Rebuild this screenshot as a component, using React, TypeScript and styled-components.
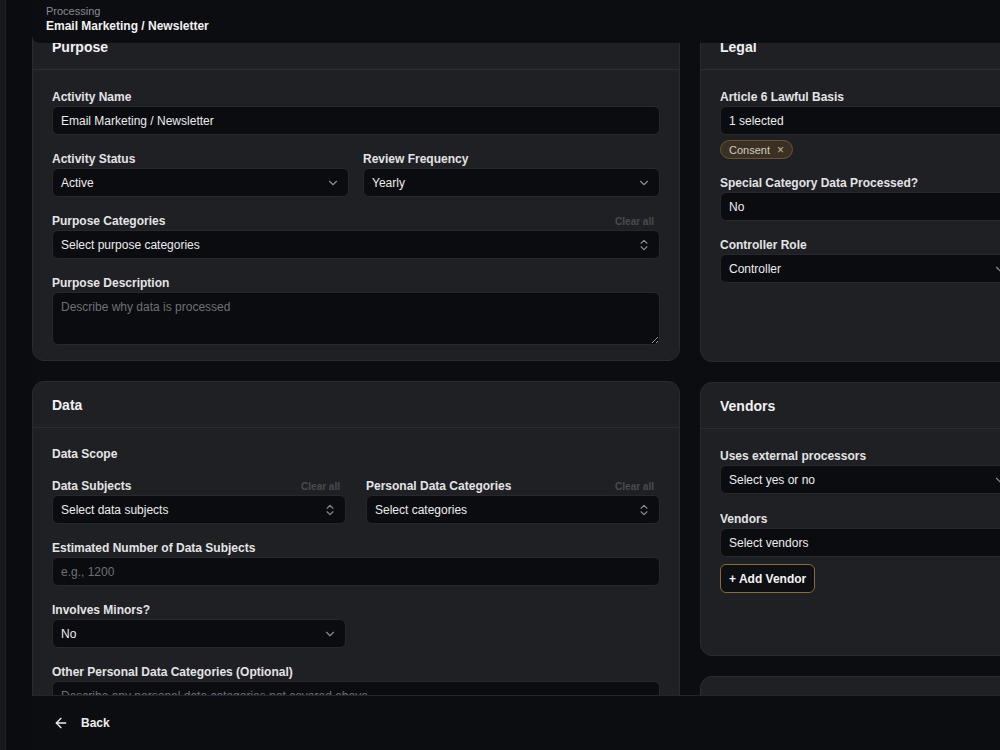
import React from "react";
import styled, { createGlobalStyle } from "styled-components";
import { ChevronDown, ChevronsUpDown, ArrowLeft } from "lucide-react";

const GlobalStyle = createGlobalStyle`
  html, body {
    margin: 0;
    padding: 0;
    height: 100%;
    overflow: hidden;
    background: #0b0c0f;
  }
  body {
    font-family: "Liberation Sans", Arial, sans-serif;
    -webkit-font-smoothing: antialiased;
  }
  #root { height: 100%; }
  * { box-sizing: border-box; }
`;

const Shell = styled.div`
  display: flex;
  height: 100vh;
  background: #0b0c0f;
`;

const Rail = styled.div`
  flex: 0 0 6px;
  background: #17181b;
  border-right: 1px solid #1e1f22;
`;

const Main = styled.main`
  flex: 1;
  min-width: 0;
  margin-left: 26px;
  display: flex;
  flex-direction: column;
  overflow: hidden;
  background: #0c0d11;
`;

const Viewport = styled.div`
  flex: 1;
  position: relative;
  overflow: hidden;
`;

const TopBar = styled.header`
  position: absolute;
  top: 0;
  left: 0;
  right: 0;
  height: 43px;
  z-index: 2;
  background: #0c0d11;
  border-bottom-left-radius: 8px;
  padding: 5px 14px 0;
  display: flex;
  flex-direction: column;
  gap: 1px;
`;

const Eyebrow = styled.div`
  font-size: 11px;
  line-height: 13px;
  color: #8a8c92;
`;

const PageTitle = styled.div`
  font-size: 12px;
  line-height: 15px;
  font-weight: 700;
  color: #f2f2f3;
`;

const Columns = styled.div`
  display: flex;
  gap: 20px;
  padding-top: 23px;
  align-items: flex-start;
`;

const Column = styled.div<{ $width: number }>`
  flex: 0 0 ${(p) => p.$width}px;
  display: flex;
  flex-direction: column;
  gap: 20px;
`;

const Card = styled.section<{ $minHeight?: number }>`
  background: #1f2023;
  border: 1px solid #2a2b2f;
  border-radius: 12px;
  min-height: ${(p) => (p.$minHeight ? `${p.$minHeight}px` : "auto")};
`;

const CardHeader = styled.div`
  height: 46px;
  padding: 0 19px;
  display: flex;
  align-items: center;
  border-bottom: 1px solid #2c2d31;
`;

const CardTitle = styled.h2`
  margin: 0;
  font-size: 14px;
  font-weight: 700;
  color: #f1f1f2;
`;

const CardBody = styled.div<{ $fieldGap?: number }>`
  padding: 20px 19px 15px;
  display: flex;
  flex-direction: column;
  gap: ${(p) => p.$fieldGap ?? 17}px;
`;

const SubHeading = styled.h3`
  margin: -1px 0 1px;
  font-size: 12px;
  line-height: 14px;
  font-weight: 700;
  color: #e6e6e8;
`;

const Field = styled.div`
  display: flex;
  flex-direction: column;
  gap: 2px;
  min-width: 0;
`;

const LabelRow = styled.div`
  display: flex;
  justify-content: space-between;
  align-items: center;
  line-height: 14px;
`;

const Label = styled.label`
  font-size: 12px;
  font-weight: 700;
  color: #e4e4e6;
`;

const ClearAll = styled.button`
  background: none;
  border: none;
  padding: 0 6px 0 0;
  font-family: inherit;
  font-size: 10px;
  font-weight: 700;
  color: #4a4b50;
  cursor: pointer;
`;

const Row = styled.div<{ $gap: number }>`
  display: grid;
  grid-template-columns: 1fr 1fr;
  gap: ${(p) => p.$gap}px;
`;

const TextInput = styled.input`
  height: 29px;
  width: 100%;
  background: #0b0c0f;
  border: 1px solid #27282c;
  border-radius: 6px;
  padding: 0 8px;
  font-family: inherit;
  font-size: 12px;
  color: #ececee;
  outline: none;
  &::placeholder { color: #6e7076; }
`;

const SelectBox = styled.div`
  height: 29px;
  background: #0b0c0f;
  border: 1px solid #27282c;
  border-radius: 6px;
  padding: 0 8px;
  display: flex;
  align-items: center;
  justify-content: space-between;
  font-size: 12px;
  color: #ececee;
  cursor: pointer;
  svg { color: #8b8c91; flex: 0 0 auto; }
`;

const TextArea = styled.textarea`
  height: 53px;
  width: 100%;
  resize: vertical;
  background: #0b0c0f;
  border: 1px solid #27282c;
  border-radius: 6px;
  padding: 7px 8px;
  font-family: inherit;
  font-size: 12px;
  color: #ececee;
  outline: none;
  display: block;
  &::placeholder { color: #6e7076; }
`;

const Chips = styled.div`
  display: flex;
  gap: 6px;
  margin-top: 3px;
`;

const Chip = styled.span`
  display: inline-flex;
  align-items: center;
  gap: 7px;
  height: 19px;
  padding: 0 8px;
  border-radius: 999px;
  background: #3a3123;
  border: 1px solid #6c5230;
  font-size: 11px;
  color: #d2ccc1;
`;

const ChipX = styled.span`
  font-size: 12px;
  color: #c2baa9;
`;

const OutlineButton = styled.button`
  align-self: flex-start;
  height: 29px;
  margin-top: 5px;
  padding: 0 8px;
  border: 1px solid #8a6a36;
  border-radius: 6px;
  background: #0e0f12;
  color: #f4f4f5;
  font-family: inherit;
  font-size: 12px;
  font-weight: 700;
  cursor: pointer;
`;

const Footer = styled.footer`
  flex: 0 0 55px;
  border-top: 1px solid #24252a;
  background: #0c0d11;
  display: flex;
  align-items: center;
  padding: 0 21px;
`;

const BackButton = styled.button`
  display: flex;
  align-items: center;
  gap: 12px;
  background: none;
  border: none;
  padding: 0;
  color: #ededee;
  font-family: inherit;
  font-size: 12px;
  font-weight: 700;
  cursor: pointer;
`;

type SelectProps = { value: string; icon?: "down" | "updown" | "none" };

const Select = ({ value, icon = "down" }: SelectProps) => (
  <SelectBox>
    <span>{value}</span>
    {icon === "updown" && <ChevronsUpDown size={14} strokeWidth={2} />}
    {icon === "down" && <ChevronDown size={14} strokeWidth={2} />}
  </SelectBox>
);

type FieldProps = { label: string; clearable?: boolean; children: React.ReactNode };

const FormField = ({ label, clearable, children }: FieldProps) => (
  <Field>
    <LabelRow>
      <Label>{label}</Label>
      {clearable && <ClearAll>Clear all</ClearAll>}
    </LabelRow>
    {children}
  </Field>
);

export default function App() {
  return (
    <>
      <GlobalStyle />
      <Shell>
        <Rail />
        <Main>
          <Viewport>
            <TopBar>
              <Eyebrow>Processing</Eyebrow>
              <PageTitle>Email Marketing / Newsletter</PageTitle>
            </TopBar>
            <Columns>
              <Column $width={648}>
                <Card>
                  <CardHeader>
                    <CardTitle>Purpose</CardTitle>
                  </CardHeader>
                  <CardBody>
                    <FormField label="Activity Name">
                      <TextInput defaultValue="Email Marketing / Newsletter" />
                    </FormField>
                    <Row $gap={14}>
                      <FormField label="Activity Status">
                        <Select value="Active" />
                      </FormField>
                      <FormField label="Review Frequency">
                        <Select value="Yearly" />
                      </FormField>
                    </Row>
                    <FormField label="Purpose Categories" clearable>
                      <Select value="Select purpose categories" icon="updown" />
                    </FormField>
                    <FormField label="Purpose Description">
                      <TextArea placeholder="Describe why data is processed" />
                    </FormField>
                  </CardBody>
                </Card>

                <Card>
                  <CardHeader>
                    <CardTitle>Data</CardTitle>
                  </CardHeader>
                  <CardBody>
                    <SubHeading>Data Scope</SubHeading>
                    <Row $gap={20}>
                      <FormField label="Data Subjects" clearable>
                        <Select value="Select data subjects" icon="updown" />
                      </FormField>
                      <FormField label="Personal Data Categories" clearable>
                        <Select value="Select categories" icon="updown" />
                      </FormField>
                    </Row>
                    <FormField label="Estimated Number of Data Subjects">
                      <TextInput placeholder="e.g., 1200" />
                    </FormField>
                    <Row $gap={20}>
                      <FormField label="Involves Minors?">
                        <Select value="No" />
                      </FormField>
                    </Row>
                    <FormField label="Other Personal Data Categories (Optional)">
                      <TextArea placeholder="Describe any personal data categories not covered above" />
                    </FormField>
                  </CardBody>
                </Card>
              </Column>

              <Column $width={336}>
                <Card $minHeight={339}>
                  <CardHeader>
                    <CardTitle>Legal</CardTitle>
                  </CardHeader>
                  <CardBody>
                    <Field>
                      <LabelRow>
                        <Label>Article 6 Lawful Basis</Label>
                      </LabelRow>
                      <Select value="1 selected" icon="none" />
                      <Chips>
                        <Chip>
                          Consent <ChipX>×</ChipX>
                        </Chip>
                      </Chips>
                    </Field>
                    <FormField label="Special Category Data Processed?">
                      <Select value="No" icon="none" />
                    </FormField>
                    <FormField label="Controller Role">
                      <Select value="Controller" />
                    </FormField>
                  </CardBody>
                </Card>

                <Card $minHeight={274}>
                  <CardHeader>
                    <CardTitle>Vendors</CardTitle>
                  </CardHeader>
                  <CardBody $fieldGap={18}>
                    <FormField label="Uses external processors">
                      <Select value="Select yes or no" />
                    </FormField>
                    <Field>
                      <LabelRow>
                        <Label>Vendors</Label>
                      </LabelRow>
                      <Select value="Select vendors" icon="none" />
                      <OutlineButton>+ Add Vendor</OutlineButton>
                    </Field>
                  </CardBody>
                </Card>

                <Card $minHeight={200}>
                  <CardHeader>
                    <CardTitle>Consent Management</CardTitle>
                  </CardHeader>
                  <CardBody>
                    <FormField label="Consent Mechanism">
                      <Select value="Select mechanism" />
                    </FormField>
                  </CardBody>
                </Card>
              </Column>
            </Columns>
          </Viewport>
          <Footer>
            <BackButton>
              <ArrowLeft size={16} strokeWidth={2} />
              Back
            </BackButton>
          </Footer>
        </Main>
      </Shell>
    </>
  );
}
